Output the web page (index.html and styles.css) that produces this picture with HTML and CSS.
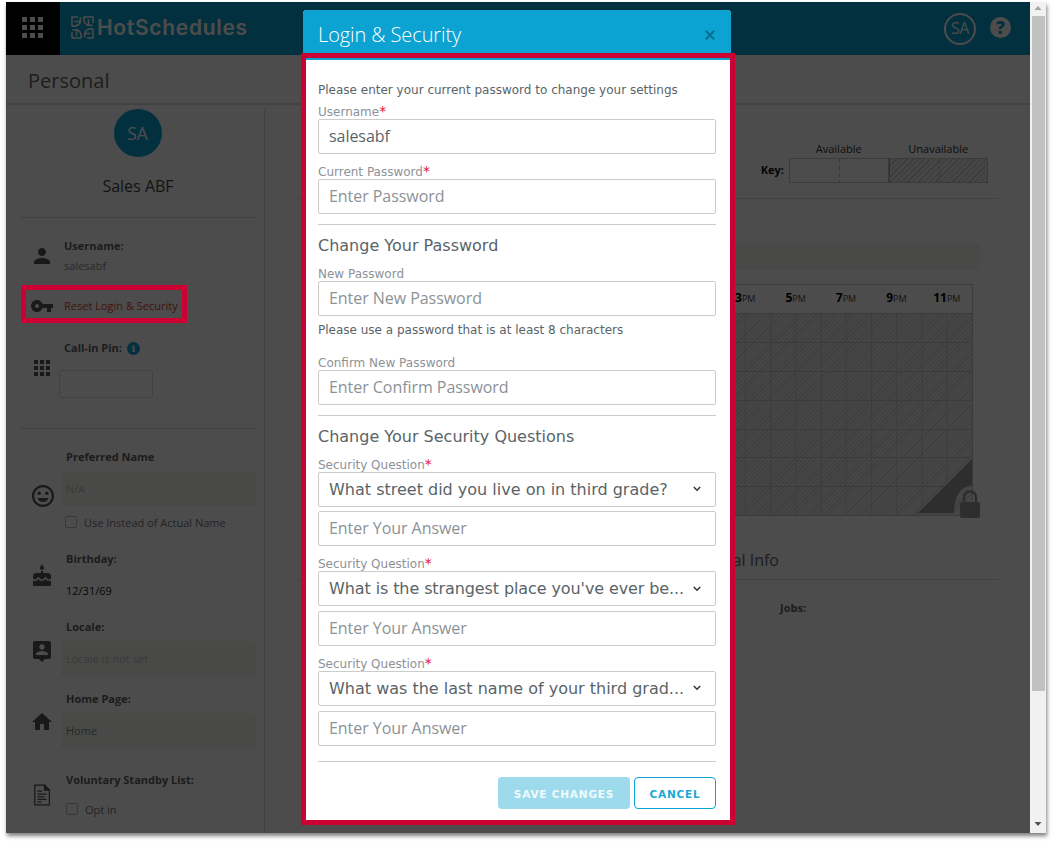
FILE: index.html
```html
<!DOCTYPE html>
<html lang="en">
    <head>
        <meta charset="UTF-8" />
        <meta name="viewport" content="width=device-width, initial-scale=1.0" />
        <title>HotSchedules - Personal</title>
        <link rel="stylesheet" href="styles.css">
    </head>
    <body>
        <div class="window">
            <div class="app">
                <header class="topbar">
                    <div class="apps">
                        <svg width="22" height="22" viewBox="0 0 22 22"><path d="M0 0h5v5H0zM8 0h5v5H8zM16 0h5v5h-5zM0 8h5v5H0zM8 8h5v5H8zM16 8h5v5h-5zM0 16h5v5H0zM8 16h5v5H8zM16 16h5v5h-5z"/></svg>
                    </div>
                    <svg class="logo" width="23" height="23" viewBox="0 0 23 23">
                        <g id="leaf"><path d="M1 10.200V1H7M3.500 5.500H9.300V1.500M9.300 5.500Q8.500 9.500 3.500 10.200H1"/></g>
                        <use href="#leaf" transform="rotate(90 11.5 11.5)"/>
                        <use href="#leaf" transform="rotate(180 11.5 11.5)"/>
                        <use href="#leaf" transform="rotate(270 11.5 11.5)"/>
                    </svg>
                    <span class="brand">HotSchedules</span>
                    <span class="user">SA</span>
                    <span class="help">?</span>
                </header>
                <div class="page-title">Personal</div>
                <div class="content">
                    <aside class="sidebar">
                        <div class="avatar">SA</div>
                        <div class="name">Sales ABF</div>

                        <div class="row row-user">
                            <svg class="ico" viewBox="0 0 24 24"><path d="M12 12c2.21 0 4-1.79 4-4s-1.79-4-4-4-4 1.79-4 4 1.79 4 4 4zm0 2c-2.67 0-8 1.34-8 4v2h16v-2c0-2.66-5.33-4-8-4z"/></svg>
                            <div>
                                <b>Username:</b>
                                <p class="muted">salesabf</p>
                            </div>
                        </div>
                        <div class="row row-reset">
                            <svg class="ico" viewBox="0 0 24 24"><path d="M12.65 10C11.83 7.67 9.61 6 7 6c-3.31 0-6 2.69-6 6s2.69 6 6 6c2.61 0 4.83-1.67 5.65-4H17v4h4v-4h2v-4H12.65zM7 14c-1.1 0-2-.9-2-2s.9-2 2-2 2 .9 2 2-.9 2-2 2z"/></svg>
                            <a class="reset">Reset Login &amp; Security</a>
                        </div>
                        <div class="row row-pin">
                            <svg class="ico" viewBox="0 0 24 24"><path d="M4 4h4v4H4zM10 4h4v4h-4zM16 4h4v4h-4zM4 10h4v4H4zM10 10h4v4h-4zM16 10h4v4h-4zM4 16h4v4H4zM10 16h4v4h-4zM16 16h4v4h-4z"/></svg>
                            <div>
                                <b>Call-in Pin: <i class="info">i</i></b>
                                <div class="pin"></div>
                            </div>
                        </div>

                        <div class="row row-pref">
                            <svg class="ico" viewBox="0 0 24 24"><path d="M11.99 1C5.9 1 1 5.92 1 12s4.9 11 10.99 11C18.08 23 23 18.08 23 12S18.08 1 11.99 1zM12 20.800c-4.860 0-8.800-3.940-8.800-8.800S7.140 3.200 12 3.200s8.800 3.940 8.800 8.800-3.940 8.800-8.800 8.800z"/><circle cx="8.200" cy="9.300" r="1.700"/><circle cx="15.800" cy="9.300" r="1.700"/><path d="M6.500 14h11c-.8 2.400-2.900 4-5.500 4s-4.700-1.600-5.500-4z"/></svg>
                            <div>
                                <b>Preferred Name</b>
                                <div class="field empty">N/A</div>
                                <label class="check"><i></i>Use Instead of Actual Name</label>
                            </div>
                        </div>
                        <div class="row row-bday">
                            <svg class="ico" viewBox="0 0 24 24"><path d="M12 6c1.110 0 2-.9 2-2 0-.38-.1-.73-.29-1.030L12 0l-1.710 2.970c-.19.3-.29.65-.29 1.030 0 1.100.9 2 2 2zm4.600 9.990l-1.070-1.070-1.080 1.070c-1.300 1.300-3.580 1.310-4.890 0l-1.070-1.070-1.090 1.070C6.750 16.640 5.880 17 4.960 17c-.73 0-1.400-.23-1.960-.61V21c0 .55.45 1 1 1h16c.55 0 1-.45 1-1v-4.610c-.56.38-1.230.61-1.960.61-.92 0-1.790-.36-2.440-1.010zM18 9h-5V7h-2v2H6c-1.660 0-3 1.340-3 3v1.540c0 1.080.88 1.960 1.960 1.960.52 0 1.020-.2 1.380-.57l2.140-2.130 2.130 2.130c.74.74 2.030.74 2.770 0l2.140-2.130 2.130 2.130c.37.37.86.57 1.380.57 1.080 0 1.960-.88 1.960-1.960V12C21 10.340 19.660 9 18 9z"/></svg>
                            <div>
                                <b>Birthday:</b>
                                <p class="date">12/31/69</p>
                            </div>
                        </div>
                        <div class="row row-locale">
                            <svg class="ico" viewBox="0 0 24 24"><path d="M19 2H5c-1.100 0-2 .9-2 2v14c0 1.100.9 2 2 2h4l3 3 3-3h4c1.100 0 2-.9 2-2V4c0-1.100-.9-2-2-2zm-7 3.300c1.490 0 2.700 1.210 2.700 2.700s-1.210 2.700-2.700 2.700S9.300 9.490 9.300 8s1.210-2.700 2.700-2.700zM18 16H6v-.9c0-2 4-3.100 6-3.100s6 1.100 6 3.100v.9z"/></svg>
                            <div>
                                <b>Locale:</b>
                                <div class="field empty">Locale is not set</div>
                            </div>
                        </div>
                        <div class="row row-home">
                            <svg class="ico" viewBox="0 0 24 24"><path d="M10 20v-6h4v6h5v-8h3L12 3 2 12h3v8z"/></svg>
                            <div>
                                <b>Home Page:</b>
                                <div class="field">Home</div>
                            </div>
                        </div>
                        <div class="row row-standby">
                            <svg class="ico doc" viewBox="0 0 24 24"><path d="M4.800 2.200h9.700l4.900 5v14.600H4.800z"/><path d="M7.500 8.200h4.500M7.500 11.200h9M7.500 13.800h7M7.500 16.300h9M7.500 18.800h4"/><path class="fold" d="M14.500 2.200v5h4.900z"/></svg>
                            <div>
                                <b>Voluntary Standby List:</b>
                                <label class="check"><i></i>Opt in</label>
                            </div>
                        </div>
                    </aside>

                    <main class="main">
                        <div class="key">
                            <b>Key:</b>
                            <div class="key-item">Available<span class="swatch"></span></div>
                            <div class="key-item">Unavailable<span class="swatch hatch"></span></div>
                        </div>
                        <div class="strip"></div>
                        <div class="calendar">
                            <div class="hours">
                                <span><b>3</b>PM</span><span><b>5</b>PM</span><span><b>7</b>PM</span><span><b>9</b>PM</span><span><b>11</b>PM</span>
                            </div>
                            <div class="grid"></div>
                            <svg class="lock" width="64" height="62" viewBox="0 0 64 62">
                                <path d="M0 54L54 0V26Q36 29 36 54Z"/>
                                <path d="M44 43h16q2 0 2 2v12q0 2-2 2H44q-2 0-2-2V45q0-2 2-2z"/>
                                <path class="shackle" d="M46 45v-6q0-6.500 6-6.500t6 6.500v6"/>
                            </svg>
                        </div>
                        <div class="info-title">Additional Info</div>
                        <div class="jobs">Jobs:</div>
                    </main>
                </div>
                <div class="overlay"></div>
            </div>
            <div class="scrollbar">
                <svg width="16" height="14" viewBox="0 0 16 14"><path fill="#a3a3a3" d="M4.500 8L8 4l3.500 4z"/></svg>
                <div class="thumb"></div>
                <svg width="16" height="16" viewBox="0 0 16 16"><path fill="#505050" d="M4.500 5L8 9l3.500-4z"/></svg>
            </div>
        </div>

        <div class="highlight link-highlight"></div>

        <div class="modal">
            <div class="modal-header">
                <span>Login &amp; Security</span>
                <svg width="10" height="10" viewBox="0 0 10 10"><path d="M.8.8l8.400 8.400M9.200.8L.8 9.200"/></svg>
            </div>
            <form class="modal-body">
                <p class="intro">Please enter your current password to change your settings</p>
                <div class="group first">
                    <label>Username<em>*</em></label>
                    <div class="input value">salesabf</div>
                </div>
                <div class="group">
                    <label>Current Password<em>*</em></label>
                    <div class="input">Enter Password</div>
                </div>
                <hr>
                <h2>Change Your Password</h2>
                <div class="group">
                    <label>New Password</label>
                    <div class="input">Enter New Password</div>
                </div>
                <p class="hint">Please use a password that is at least 8 characters</p>
                <div class="group confirm">
                    <label>Confirm New Password</label>
                    <div class="input">Enter Confirm Password</div>
                </div>
                <hr>
                <h2>Change Your Security Questions</h2>
                <div class="group">
                    <label>Security Question<em>*</em></label>
                    <div class="input select"><span>What street did you live on in third grade?</span><svg width="8" height="6" viewBox="0 0 8 6"><path d="M.8 1l3.200 3.200L7.200 1"/></svg></div>
                    <div class="input answer">Enter Your Answer</div>
                </div>
                <div class="group">
                    <label>Security Question<em>*</em></label>
                    <div class="input select"><span class="tight">What is the strangest place you've ever be...</span><svg width="8" height="6" viewBox="0 0 8 6"><path d="M.8 1l3.200 3.200L7.200 1"/></svg></div>
                    <div class="input answer">Enter Your Answer</div>
                </div>
                <div class="group">
                    <label>Security Question<em>*</em></label>
                    <div class="input select"><span>What was the last name of your third grad...</span><svg width="8" height="6" viewBox="0 0 8 6"><path d="M.8 1l3.200 3.200L7.200 1"/></svg></div>
                    <div class="input answer">Enter Your Answer</div>
                </div>
                <hr class="last">
                <div class="actions">
                    <button type="button" class="save">SAVE CHANGES</button>
                    <button type="button" class="cancel">CANCEL</button>
                </div>
            </form>
        </div>
        <div class="highlight modal-highlight"></div>
    </body>
</html>
```
FILE: styles.css
```css
* {
    box-sizing: border-box;
}
html, body {
    margin: 0;
    padding: 0;
    height: 100%;
    overflow: hidden;
    background: #fff;
}
body {
    padding: 2px 6px 0;
    font-family: 'Open Sans', sans-serif;
    font-size: 11px;
}
p, h2 {
    margin: 0;
}

.window {
    display: flex;
    width: 1040px;
    height: 831px;
    box-shadow: 1px 3px 4px rgba(0,0,0,0.5);
}
.app {
    position: relative;
    width: 1024px;
    height: 831px;
    overflow: hidden;
    background: #fff;
}
.overlay {
    position: absolute;
    top: 0;
    left: 0;
    right: 0;
    bottom: 0;
    background: rgba(0,0,0,0.7);
}

/* top bar */
.topbar {
    display: flex;
    align-items: center;
    height: 53px;
    background: #0ca2d2;
    color: #fff;
}
.apps {
    width: 54px;
    height: 53px;
    padding: 15px 0 0 16px;
    background: #000;
    fill: #fff;
}
.logo {
    margin: -3px 3px 0 11px;
    fill: none;
    stroke: #fff;
    stroke-width: 1.500;
}
.brand {
    flex: 1;
    margin-top: -3px;
    font-family: Inter, sans-serif;
    font-weight: 600;
    font-size: 21px;
    letter-spacing: 0.7px;
}
.user {
    width: 32px;
    height: 32px;
    margin-right: 14px;
    border: 2px solid #fff;
    border-radius: 50%;
    line-height: 27px;
    text-align: center;
    font-size: 16px;
    letter-spacing: -0.5px;
}
.help {
    width: 21px;
    height: 21px;
    margin: -2px 19px 0 0;
    border-radius: 50%;
    background: #fff;
    color: #0ca2d2;
    line-height: 21px;
    text-align: center;
    font-size: 17px;
    font-weight: 800;
}

.page-title {
    height: 50px;
    padding-left: 22px;
    border-bottom: 2px solid #dedede;
    line-height: 51px;
    font-size: 20px;
    color: #666;
}
.content {
    display: flex;
}

/* sidebar */
.sidebar {
    width: 259px;
    height: 740px;
    margin-top: 4px;
    padding-left: 14px;
    border-right: 1px solid #dadada;
    color: #606060;
}
.avatar {
    width: 48px;
    height: 48px;
    margin-left: 93.500px;
    border-radius: 50%;
    background: #0ca2d2;
    color: #fff;
    line-height: 49px;
    text-align: center;
    font-size: 17.500px;
}
.name {
    width: 236px;
    height: 61px;
    border-bottom: 1px solid #dadada;
    line-height: 58px;
    text-align: center;
    font-size: 16px;
    color: #444;
}
.row {
    display: flex;
    width: 236px;
    line-height: 16px;
}
.row b {
    display: block;
    color: #606060;
}
.ico {
    flex: none;
    width: 24px;
    height: 24px;
    margin: 0 12px 0 10px;
    fill: #555;
}
.muted {
    margin-top: 4px;
    color: #888;
}
.row-user {
    height: 67px;
    padding-top: 20px;
}
.row-user .ico {
    margin: 6px 10px 0 10px;
}
.row-reset {
    height: 41px;
    align-items: center;
}
.row-reset .ico {
    margin-right: 10px;
}
.reset {
    color: #d9472b;
}
.row-pin {
    height: 103px;
    padding-top: 14px;
    border-bottom: 1px solid #dadada;
}
.row-pin .ico {
    margin: 16px 10px 0 10px;
}
.info {
    display: inline-block;
    width: 13px;
    height: 13px;
    margin-left: 2px;
    border-radius: 50%;
    background: #0ca2d2;
    color: #fff;
    text-align: center;
    font: bold 10px/13px 'DejaVu Serif', serif;
}
.pin {
    width: 94px;
    height: 28px;
    margin: 14px 0 0 -5px;
    border: 1px solid #ddd;
    border-radius: 2px;
}
.field {
    width: 195px;
    height: 35px;
    margin: 6px 0 0 -5px;
    padding-left: 5px;
    border-radius: 2px;
    background: #f6f5f0;
    line-height: 35px;
    color: #888;
}
.empty {
    color: #c0c0c0;
}
.check {
    display: flex;
    margin-top: 9px;
    color: #777;
}
.check i {
    width: 12px;
    height: 12px;
    margin: 1px 7px 0 -1px;
    border: 1px solid #bbb;
    border-radius: 2px;
}
.row-pref {
    height: 102px;
    padding-top: 20px;
}
.row-pref .ico {
    margin: 35px 11px 0 11px;
}
.row-bday {
    height: 68px;
    padding-top: 20px;
}
.row-bday .ico {
    margin-top: 13px;
}
.date {
    margin-top: 16px;
    color: #111;
}
.row-locale {
    height: 72px;
    padding-top: 20px;
}
.row-locale .ico {
    margin-top: 20px;
}
.row-home {
    height: 81px;
    padding-top: 20px;
}
.row-home .ico {
    margin-top: 19px;
}
.row-standby {
    padding-top: 20px;
}
.row-standby .ico {
    margin-top: 11px;
}
.row-standby .check {
    margin-top: 14px;
}
.row-standby .check i {
    margin-left: 0;
}
.doc path {
    fill: none;
    stroke: #555;
    stroke-width: 1.300;
}
.doc .fold {
    fill: #555;
}

/* availability */
.main {
    width: 733px;
    padding-left: 32px;
}
.key {
    display: flex;
    justify-content: flex-end;
    align-items: flex-end;
    height: 94px;
    padding: 0 10px 15px 0;
    border-bottom: 1px solid #dadada;
}
.key > b {
    margin-right: 5px;
    line-height: 26px;
    color: #111;
}
.key-item {
    width: 99.500px;
    text-align: center;
    line-height: 18px;
    color: #333;
}
.swatch {
    display: block;
    height: 25px;
    border: 1px solid #c4c4c4;
    background-image: repeating-linear-gradient(#c4c4c4 0 4px, transparent 4px 7px);
    background-size: 1px 100%;
    background-position: 49px 0;
    background-repeat: no-repeat;
}
.swatch.hatch {
    border-left-color: #a8a8a8;
    background-image:
        repeating-linear-gradient(#c4c4c4 0 4px, transparent 4px 7px),
        repeating-linear-gradient(135deg, #c9c9c9 0 1px, #ebebeb 1px 4px);
    background-size: 1px 100%, auto;
    background-position: 49px 0, 0 0;
    background-repeat: no-repeat, repeat;
}
.strip {
    height: 26px;
    margin: 45px 18px 0 70px;
    border-radius: 2px;
    background: #f6f5f0;
}
.calendar {
    position: relative;
    width: 606px;
    margin: 14px 0 0 70px;
}
.hours {
    display: flex;
    justify-content: flex-end;
    height: 29px;
    border: 1px solid #c8c8c8;
    border-bottom: 0;
    line-height: 26px;
    font-size: 9px;
    color: #444;
}
.hours span {
    width: 50.400px;
    text-align: center;
}
.hours b {
    font-size: 12px;
    color: #000;
}
.grid {
    height: 203px;
    background-image:
        repeating-linear-gradient(to bottom, #c6c6c6 0 1px, transparent 1px 28.900px),
        linear-gradient(to left, transparent 49.400px, #c6c6c6 49.400px),
        linear-gradient(to left, transparent 25px, #cdcdcd 25px 26px, transparent 26px),
        repeating-linear-gradient(135deg, #d4d4d4 0 1px, #ebebeb 1px 3px);
    background-size: 100% 100%, 50.400px 100%, 50.400px 100%, auto;
    background-position: 0 0, right top, right top, 0 0;
    border-right: 1px dashed #bbb;
    border-bottom: 1px solid #c6c6c6;
}
.lock {
    position: absolute;
    left: 551px;
    top: 175px;
    fill: #999;
}
.shackle {
    fill: none;
    stroke: #999;
    stroke-width: 2.500;
}
.info-title {
    height: 64px;
    padding: 31px 219px 0 0;
    border-bottom: 1px solid #dadada;
    line-height: 26px;
    text-align: right;
    font-size: 16px;
    color: #666;
}
.jobs {
    padding: 20px 0 0 483px;
    line-height: 16px;
    font-weight: 700;
    color: #606060;
}

.scrollbar {
    display: flex;
    flex-direction: column;
    justify-content: space-between;
    width: 16px;
    background: #f1f1f1;
}
.thumb {
    width: 13px;
    height: 675px;
    margin: 0 auto auto 2px;
    background: #c1c1c1;
}

/* red call-out frames */
.highlight {
    position: absolute;
    border: 5px solid #cc0033;
}
.link-highlight {
    left: 21px;
    top: 285px;
    width: 166px;
    height: 38px;
}
.modal-highlight {
    left: 301px;
    top: 53px;
    width: 434px;
    height: 772px;
}

/* dialog */
.modal {
    position: absolute;
    left: 303px;
    top: 10px;
    width: 428px;
    height: 812px;
    border-radius: 4px;
    background: #fff;
    overflow: hidden;
    font-family: 'DejaVu Sans', Verdana, sans-serif;
    color: #5a6468;
}
.modal-header {
    display: flex;
    justify-content: space-between;
    align-items: center;
    height: 50px;
    padding: 0 16px 1px 15px;
    background: #0ca2d2;
    color: #fff;
    font-family: 'Open Sans', sans-serif;
    font-size: 20px;
    font-weight: 350;
    letter-spacing: -0.1px;
}
.modal-header svg {
    fill: none;
    stroke: #08708f;
    stroke-width: 2;
}
.modal-body {
    padding: 22px 15px 0;
}
.intro, .hint {
    height: 15px;
    line-height: 16px;
    font-size: 12px;
}
.hint {
    margin-top: 6px;
}
.group {
    margin-top: 10px;
}
.group.first {
    margin-top: 7px;
}
.group.confirm {
    margin-top: 18px;
}
.group label {
    display: block;
    height: 15px;
    line-height: 17px;
    font-size: 12px;
    color: #8c9296;
}
.group em {
    color: #e0103c;
    font-size: 14px;
    line-height: 1;
    font-style: normal;
}
.input {
    height: 35px;
    padding: 0 10px;
    border: 1px solid #ccc;
    border-radius: 2px;
    line-height: 33px;
    font-family: 'Open Sans', sans-serif;
    font-size: 16px;
    letter-spacing: -0.05px;
    color: #8c9296;
}
.input.value {
    color: #5a6468;
}
.input.answer {
    margin-top: 4.600px;
}
.input.select {
    display: flex;
    justify-content: space-between;
    align-items: center;
    padding-right: 14px;
    font-family: 'DejaVu Sans', Verdana, sans-serif;
    letter-spacing: 0;
    color: #5a6468;
    white-space: nowrap;
}
.tight {
    letter-spacing: -0.1px;
}
.select svg {
    fill: none;
    stroke: #333;
    stroke-width: 1.500;
}
hr {
    height: 1px;
    margin: 10px 0 0;
    border: 0;
    background: #ccc;
}
h2 {
    margin-top: 10px;
    height: 20px;
    line-height: 22px;
    font-size: 16px;
    font-weight: 400;
}
h2 + .group {
    margin-top: 10.900px;
}
.last {
    margin-top: 15px;
}
.actions {
    display: flex;
    justify-content: flex-end;
    gap: 4px;
    margin-top: 15px;
}
.actions button {
    height: 32px;
    padding: 3px 0 0;
    border: 1px solid #0ca2d2;
    border-radius: 4px;
    background: #fff;
    color: #1ba8d6;
    font-family: 'DejaVu Sans', Verdana, sans-serif;
    font-size: 10.500px;
    font-weight: 700;
    letter-spacing: 0.8px;
}
.actions .save {
    width: 132px;
    border: 0;
    background: #9ddaec;
    color: #f0fafd;
}
.actions .cancel {
    width: 82px;
}
```
